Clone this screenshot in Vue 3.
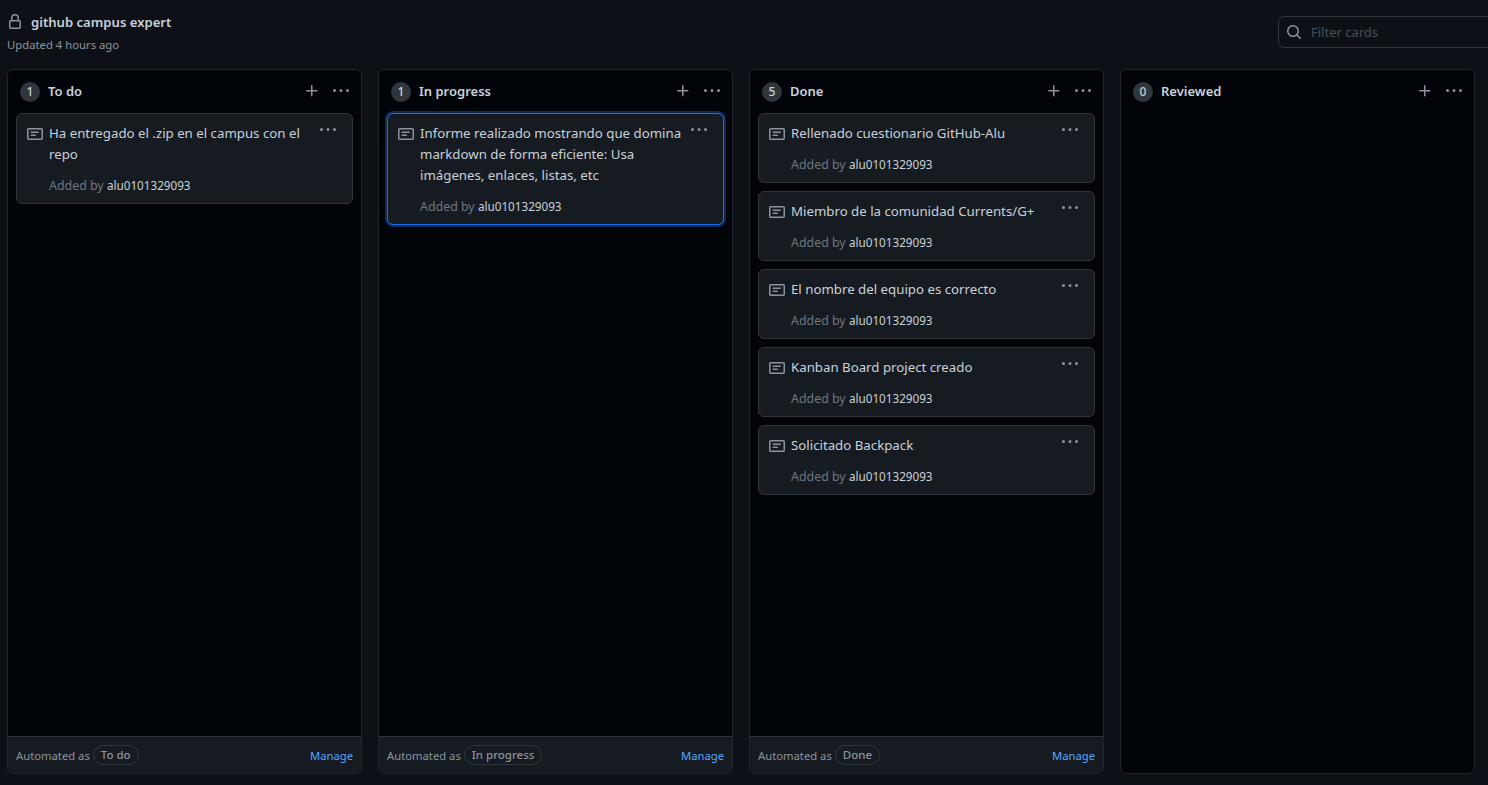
<template>
  <div class="page">
    <header class="top">
      <div class="info">
        <div class="title-row">
          <svg class="lock" viewBox="0 0 16 16" width="16" height="16">
            <path fill="currentColor" fill-rule="evenodd" d="M4 4a4 4 0 0 1 8 0v2h.25c.966 0 1.75.784 1.75 1.75v5.5A1.75 1.75 0 0 1 12.25 15h-8.5A1.75 1.75 0 0 1 2 13.25v-5.5C2 6.784 2.784 6 3.75 6H4Zm6.5 2V4a2.5 2.5 0 1 0-5 0v2ZM3.75 7.5a.25.25 0 0 0-.25.25v5.5c0 .138.112.25.25.25h8.5a.25.25 0 0 0 .25-.25v-5.5a.25.25 0 0 0-.25-.25Z" />
          </svg>
          <h1>github campus expert</h1>
        </div>
        <p class="updated">Updated 4 hours ago</p>
      </div>
      <div class="filter">
        <svg viewBox="0 0 16 16" width="16" height="16">
          <path fill="currentColor" d="M10.68 11.74a6 6 0 0 1-7.922-8.982 6 6 0 0 1 8.982 7.922l3.04 3.04a.749.749 0 1 1-1.06 1.06ZM11.5 7a4.499 4.499 0 1 0-8.997 0A4.499 4.499 0 0 0 11.5 7Z" />
        </svg>
        <span>Filter cards</span>
      </div>
    </header>

    <main class="board">
      <section v-for="col in columns" :key="col.name" class="column">
        <div class="col-head">
          <span class="count">{{ col.cards.length }}</span>
          <h2>{{ col.name }}</h2>
          <svg class="plus" viewBox="0 0 16 16" width="16" height="16">
            <path fill="currentColor" d="M7.75 2a.75.75 0 0 1 .75.75V7h4.25a.75.75 0 0 1 0 1.5H8.5v4.25a.75.75 0 0 1-1.5 0V8.5H2.75a.75.75 0 0 1 0-1.5H7V2.75A.75.75 0 0 1 7.75 2Z" />
          </svg>
          <svg class="dots" viewBox="0 0 16 16" width="16" height="16">
            <path fill="currentColor" d="M8 9a1.5 1.5 0 1 0 0-3 1.5 1.5 0 0 0 0 3ZM1.5 9a1.5 1.5 0 1 0 0-3 1.5 1.5 0 0 0 0 3Zm13 0a1.5 1.5 0 1 0 0-3 1.5 1.5 0 0 0 0 3Z" />
          </svg>
        </div>

        <div class="cards">
          <article v-for="card in col.cards" :key="card.text" class="card" :class="{ focused: card.focused }">
            <svg class="note" viewBox="0 0 16 16" width="16" height="16">
              <path fill="currentColor" d="M0 3.75C0 2.784.784 2 1.75 2h12.5c.966 0 1.75.784 1.75 1.75v8.5A1.75 1.75 0 0 1 14.25 14H1.75A1.75 1.75 0 0 1 0 12.25Zm1.75-.25a.25.25 0 0 0-.25.25v8.5c0 .138.112.25.25.25h12.5a.25.25 0 0 0 .25-.25v-8.5a.25.25 0 0 0-.25-.25ZM3.5 6.25a.75.75 0 0 1 .75-.75h7a.75.75 0 0 1 0 1.5h-7a.75.75 0 0 1-.75-.75Zm.75 2.25h4a.75.75 0 0 1 0 1.5h-4a.75.75 0 0 1 0-1.5Z" />
            </svg>
            <div class="body">
              <p class="text">{{ card.text }}</p>
              <p class="by">Added by <span>alu0101329093</span></p>
            </div>
            <svg class="card-dots" viewBox="0 0 16 16" width="16" height="16">
              <path fill="currentColor" d="M8 9a1.5 1.5 0 1 0 0-3 1.5 1.5 0 0 0 0 3ZM1.5 9a1.5 1.5 0 1 0 0-3 1.5 1.5 0 0 0 0 3Zm13 0a1.5 1.5 0 1 0 0-3 1.5 1.5 0 0 0 0 3Z" />
            </svg>
          </article>
        </div>

        <footer v-if="col.automated" class="col-foot">
          <span class="auto">Automated as</span>
          <span class="pill">{{ col.name }}</span>
          <a class="manage">Manage</a>
        </footer>
      </section>
    </main>
  </div>
</template>

<script setup>
const columns = [
  {
    name: "To do",
    automated: true,
    cards: [{ text: "Ha entregado el .zip en el campus con el repo" }],
  },
  {
    name: "In progress",
    automated: true,
    cards: [
      {
        text: "Informe realizado mostrando que domina markdown de forma eficiente: Usa imágenes, enlaces, listas, etc",
        focused: true,
      },
    ],
  },
  {
    name: "Done",
    automated: true,
    cards: [
      { text: "Rellenado cuestionario GitHub-Alu" },
      { text: "Miembro de la comunidad Currents/G+" },
      { text: "El nombre del equipo es correcto" },
      { text: "Kanban Board project creado" },
      { text: "Solicitado Backpack" },
    ],
  },
  { name: "Reviewed", automated: false, cards: [] },
];
</script>

<style>
html,
body {
  margin: 0;
  height: 100%;
  overflow: hidden;
  background: #0d1117;
}
</style>

<style scoped>
.page {
  width: 1488px;
  height: 785px;
  display: flex;
  flex-direction: column;
  background: #0d1117;
  color: #c9d1d9;
  font-family: "Noto Sans", "Open Sans", sans-serif;
  font-size: 13px;
  overflow: hidden;
}

.top {
  height: 69px;
  flex: none;
  display: flex;
  justify-content: space-between;
  padding-left: 7px;
  box-sizing: border-box;
}

.info {
  padding-top: 13px;
}

.title-row {
  display: flex;
  align-items: center;
  height: 17px;
}

.lock {
  color: #8b949e;
  margin-right: 8px;
}

h1 {
  margin: 0;
  font-size: 13.1px;
  font-weight: 600;
  color: #c9d1d9;
}

.updated {
  margin: 7px 0 0;
  font-size: 11.3px;
  line-height: 16px;
  color: #8b949e;
}

.filter {
  margin-top: 16px;
  width: 320px;
  height: 32px;
  flex: none;
  margin-right: -110px;
  box-sizing: border-box;
  border: 1px solid #30363d;
  border-radius: 6px;
  display: flex;
  align-items: center;
  padding-left: 7px;
  gap: 9px;
  color: #8b949e;
}

.filter span {
  color: #484f58;
  font-size: 13px;
}

.board {
  display: flex;
  gap: 16px;
  padding-left: 7px;
  height: 705px;
}

.column {
  width: 355px;
  flex: none;
  box-sizing: border-box;
  display: flex;
  flex-direction: column;
  background: #010409;
  border: 1px solid #21262d;
  border-radius: 6px;
  overflow: hidden;
}

.col-head {
  height: 43px;
  flex: none;
  display: flex;
  align-items: center;
  padding: 0 12px;
  box-sizing: border-box;
}

.count {
  width: 20px;
  height: 20px;
  border-radius: 50%;
  background: #30363d;
  color: #c9d1d9;
  font-size: 12px;
  font-weight: 500;
  line-height: 20px;
  text-align: center;
  margin-right: 8px;
}

h2 {
  margin: -2px 0 0;
  flex: 1;
  font-size: 13px;
  font-weight: 600;
  color: #c9d1d9;
}

.plus {
  color: #8b949e;
  margin-right: 13px;
  margin-top: -2px;
}

.dots {
  color: #8b949e;
  margin-top: -2px;
}

.cards {
  flex: 1;
  display: flex;
  flex-direction: column;
  gap: 8px;
  padding: 0 8px;
}

.card {
  position: relative;
  display: flex;
  box-sizing: border-box;
  background: #161b22;
  border: 1px solid #30363d;
  border-radius: 6px;
  padding: 9px 10px 7px 10px;
}

.card.focused {
  border-color: #1f6feb;
  box-shadow: 0 0 0 2px rgba(31, 111, 235, 0.35);
}

.note {
  flex: none;
  color: #8b949e;
  margin: 3px 6px 0 0;
}

.body {
  flex: 1;
  padding-right: 26px;
}

.text {
  margin: 0;
  font-size: 13.25px;
  line-height: 21px;
  color: #c9d1d9;
}

.by {
  margin: 10px 0 0;
  font-size: 12.4px;
  line-height: 21px;
  color: #6e7681;
}

.by span {
  font-size: 11.7px;
  color: #c9d1d9;
}

.card-dots {
  position: absolute;
  top: 8px;
  right: 16px;
  color: #8b949e;
}

.col-foot {
  height: 37px;
  flex: none;
  box-sizing: border-box;
  display: flex;
  align-items: center;
  padding: 0 8px;
  background: #161b22;
  border-top: 1px solid #30363d;
}

.auto {
  font-size: 11.25px;
  color: #8b949e;
  margin-right: 3px;
}

.pill {
  border: 1px solid #30363d;
  border-radius: 10px;
  padding: 0 7px;
  height: 18px;
  line-height: 18px;
  font-size: 11.5px;
  color: #8b949e;
  font-weight: 500;
}

.manage {
  margin-left: auto;
  font-size: 11.25px;
  color: #58a6ff;
}
</style>
